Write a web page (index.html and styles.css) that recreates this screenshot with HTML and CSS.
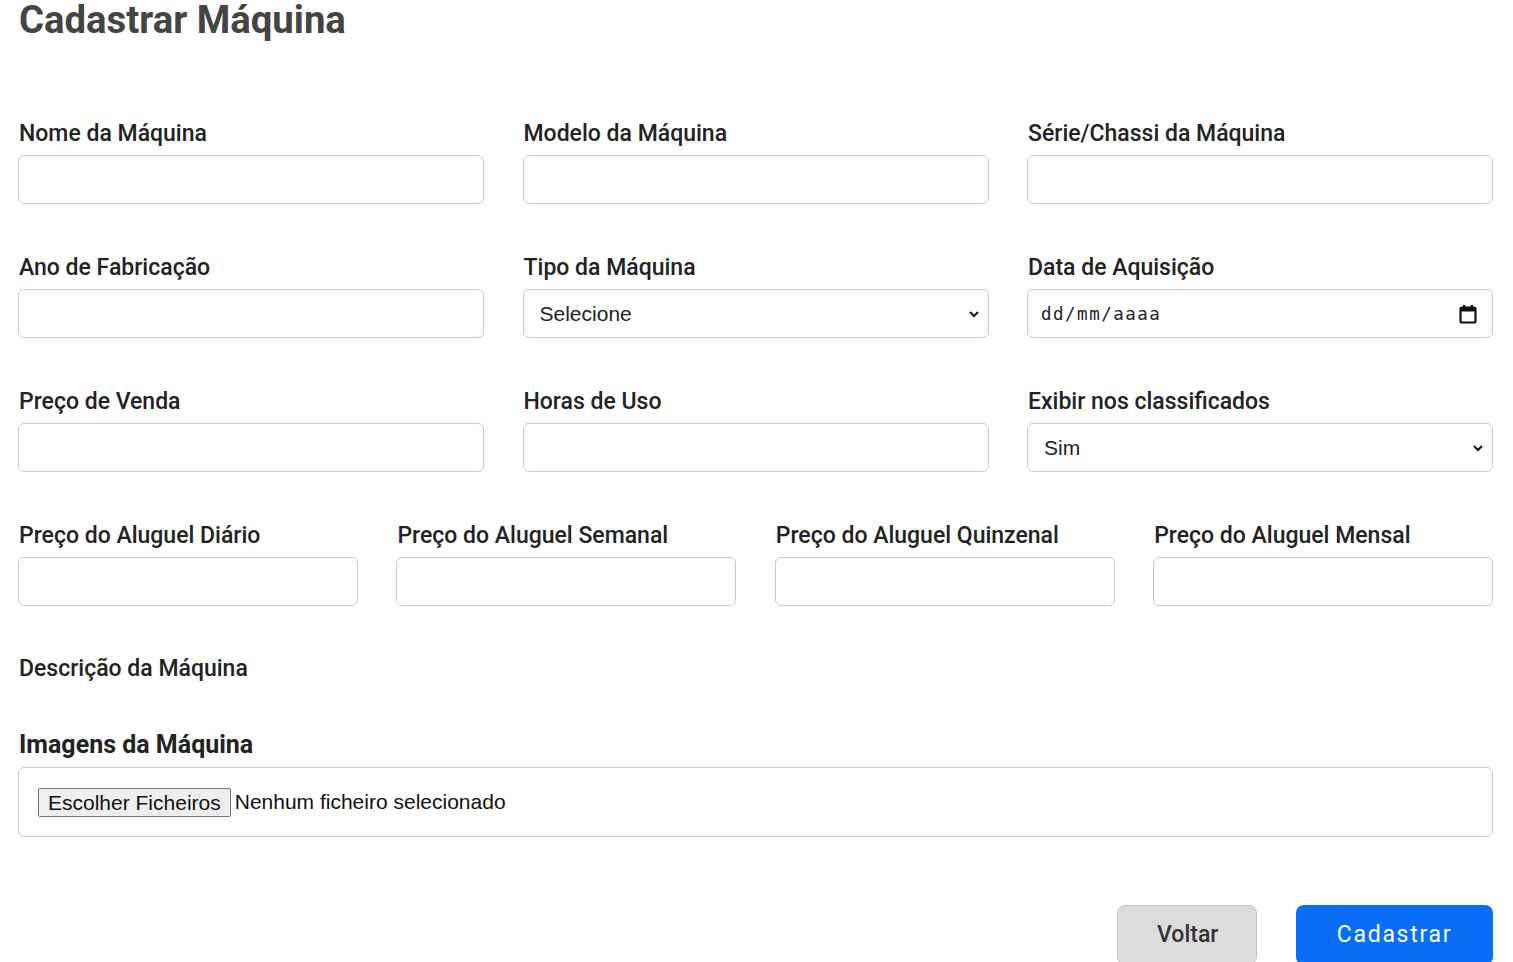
FILE: index.html
```html
<!DOCTYPE html>
<html lang="pt">
<head>
<meta charset="utf-8">
<title>Cadastrar Máquina</title>
<link rel="stylesheet" href="styles.css">
</head>
<body>
<div class="page">
  <h1 class="title">Cadastrar Máquina</h1>
  <form class="form">
    <div class="grid grid-3">
      <div class="field">
        <label class="label">Nome da Máquina</label>
        <input class="control" type="text">
      </div>
      <div class="field">
        <label class="label">Modelo da Máquina</label>
        <input class="control" type="text">
      </div>
      <div class="field">
        <label class="label">Série/Chassi da Máquina</label>
        <input class="control" type="text">
      </div>
      <div class="field">
        <label class="label">Ano de Fabricação</label>
        <input class="control" type="text">
      </div>
      <div class="field">
        <label class="label">Tipo da Máquina</label>
        <div class="select-wrap">
          <select class="control select"><option>Selecione</option></select>
          <svg class="chevron" width="12" height="8" viewBox="0 0 12 8"><path d="M2 2 L6 6 L10 2" fill="none" stroke="#111" stroke-width="2"/></svg>
        </div>
      </div>
      <div class="field">
        <label class="label">Data de Aquisição</label>
        <div class="control date">
          <span class="date-text">dd/mm/aaaa</span>
          <svg class="cal" width="18" height="20" viewBox="0 0 18 20"><rect x="1.5" y="3.5" width="15" height="15" rx="1.5" fill="none" stroke="#111" stroke-width="2.2"/><rect x="1.5" y="3.5" width="15" height="4" fill="#111"/><rect x="4" y="1" width="2.2" height="4" fill="#111"/><rect x="11.8" y="1" width="2.2" height="4" fill="#111"/></svg>
        </div>
      </div>
      <div class="field">
        <label class="label">Preço de Venda</label>
        <input class="control" type="text">
      </div>
      <div class="field">
        <label class="label">Horas de Uso</label>
        <input class="control" type="text">
      </div>
      <div class="field">
        <label class="label">Exibir nos classificados</label>
        <div class="select-wrap">
          <select class="control select"><option>Sim</option><option>Não</option></select>
          <svg class="chevron" width="12" height="8" viewBox="0 0 12 8"><path d="M2 2 L6 6 L10 2" fill="none" stroke="#111" stroke-width="2"/></svg>
        </div>
      </div>
    </div>
    <div class="grid grid-4">
      <div class="field">
        <label class="label">Preço do Aluguel Diário</label>
        <input class="control" type="text">
      </div>
      <div class="field">
        <label class="label">Preço do Aluguel Semanal</label>
        <input class="control" type="text">
      </div>
      <div class="field">
        <label class="label">Preço do Aluguel Quinzenal</label>
        <input class="control" type="text">
      </div>
      <div class="field">
        <label class="label">Preço do Aluguel Mensal</label>
        <input class="control" type="text">
      </div>
    </div>
    <div class="desc">
      <label class="label">Descrição da Máquina</label>
    </div>
    <div class="images">
      <label class="label label-bold">Imagens da Máquina</label>
      <div class="filebox">
        <span class="file-btn">Escolher Ficheiros</span>
        <span class="file-text">Nenhum ficheiro selecionado</span>
      </div>
    </div>
    <div class="actions">
      <button type="button" class="btn btn-back">Voltar</button>
      <button type="button" class="btn btn-submit">Cadastrar</button>
    </div>
  </form>
</div>
</body>
</html>
```
FILE: styles.css
```css
* { box-sizing: border-box; }
html, body { margin: 0; padding: 0; background: #fff; }
body { font-family: Roboto, "Liberation Sans", sans-serif; color: #222; overflow: hidden; }
.page { padding: 0 20px 0 18px; }
.title {
  margin: -2px 0 0;
  font-family: Roboto, sans-serif;
  font-weight: 700;
  font-size: 38.3px;
  color: #444;
  line-height: 44px;
  padding-left: 1px;
}
.form { margin-top: 79px; display: flex; flex-direction: column; }
.grid { display: grid; column-gap: 38.5px; row-gap: 51px; }
.grid-3 { grid-template-columns: repeat(3, 1fr); }
.grid-4 { grid-template-columns: repeat(4, 1fr); margin-top: 51px; }
.field { display: flex; flex-direction: column; min-width: 0; }
.label {
  display: block;
  font-family: Roboto, sans-serif;
  font-weight: 500;
  font-size: 23px;
  line-height: 25px;
  color: #222;
  margin-bottom: 9px;
  padding-left: 1px;
}
.label-bold { font-weight: 700; font-size: 25px; line-height: 27px; }
.control {
  width: 100%;
  height: 49px;
  border: 1px solid #cacaca;
  border-radius: 6px;
  background: #fff;
  font-family: "Liberation Sans", Arial, sans-serif;
  font-size: 21px;
  color: #222;
  padding: 0 16px;
  outline: none;
}
.select-wrap { position: relative; }
.select { appearance: none; -webkit-appearance: none; }
.chevron { position: absolute; right: 9px; top: 21px; pointer-events: none; }
.date { display: flex; align-items: center; justify-content: space-between; padding: 0 15px 0 13px; }
.date-text { font-family: "DejaVu Sans Mono", monospace; font-size: 17.5px; letter-spacing: 1.5px; color: #222; }
.cal { display: block; }
.desc { margin-top: 50px; }
.images { margin-top: 41px; }
.filebox {
  height: 70px;
  border: 1px solid #cacaca;
  border-radius: 6px;
  padding: 0 19px;
  display: flex;
  align-items: center;
  font-family: "Liberation Sans", Arial, sans-serif;
  font-size: 21px;
  color: #111;
}
.file-btn {
  display: inline-block;
  height: 29px;
  line-height: 27px;
  padding: 0 9px;
  background: #efefef;
  border: 1px solid #767676;
  border-radius: 2px;
  margin-right: 4px;
}
.actions { margin-top: 68px; display: flex; justify-content: flex-end; gap: 39px; }
.btn {
  height: 60px;
  border-radius: 8px;
  padding: 0 39px 2px;
  font-family: Roboto, sans-serif;
  font-size: 23px;
  cursor: pointer;
}
.btn-back { background: #dcdcdc; border: 1px solid #c4c4c4; color: #333; font-weight: 500; width: 140px; }
.btn-submit { background: #0a6ef7; border: none; color: #fff; font-weight: 400; letter-spacing: 1.7px; width: 197px; }
```
